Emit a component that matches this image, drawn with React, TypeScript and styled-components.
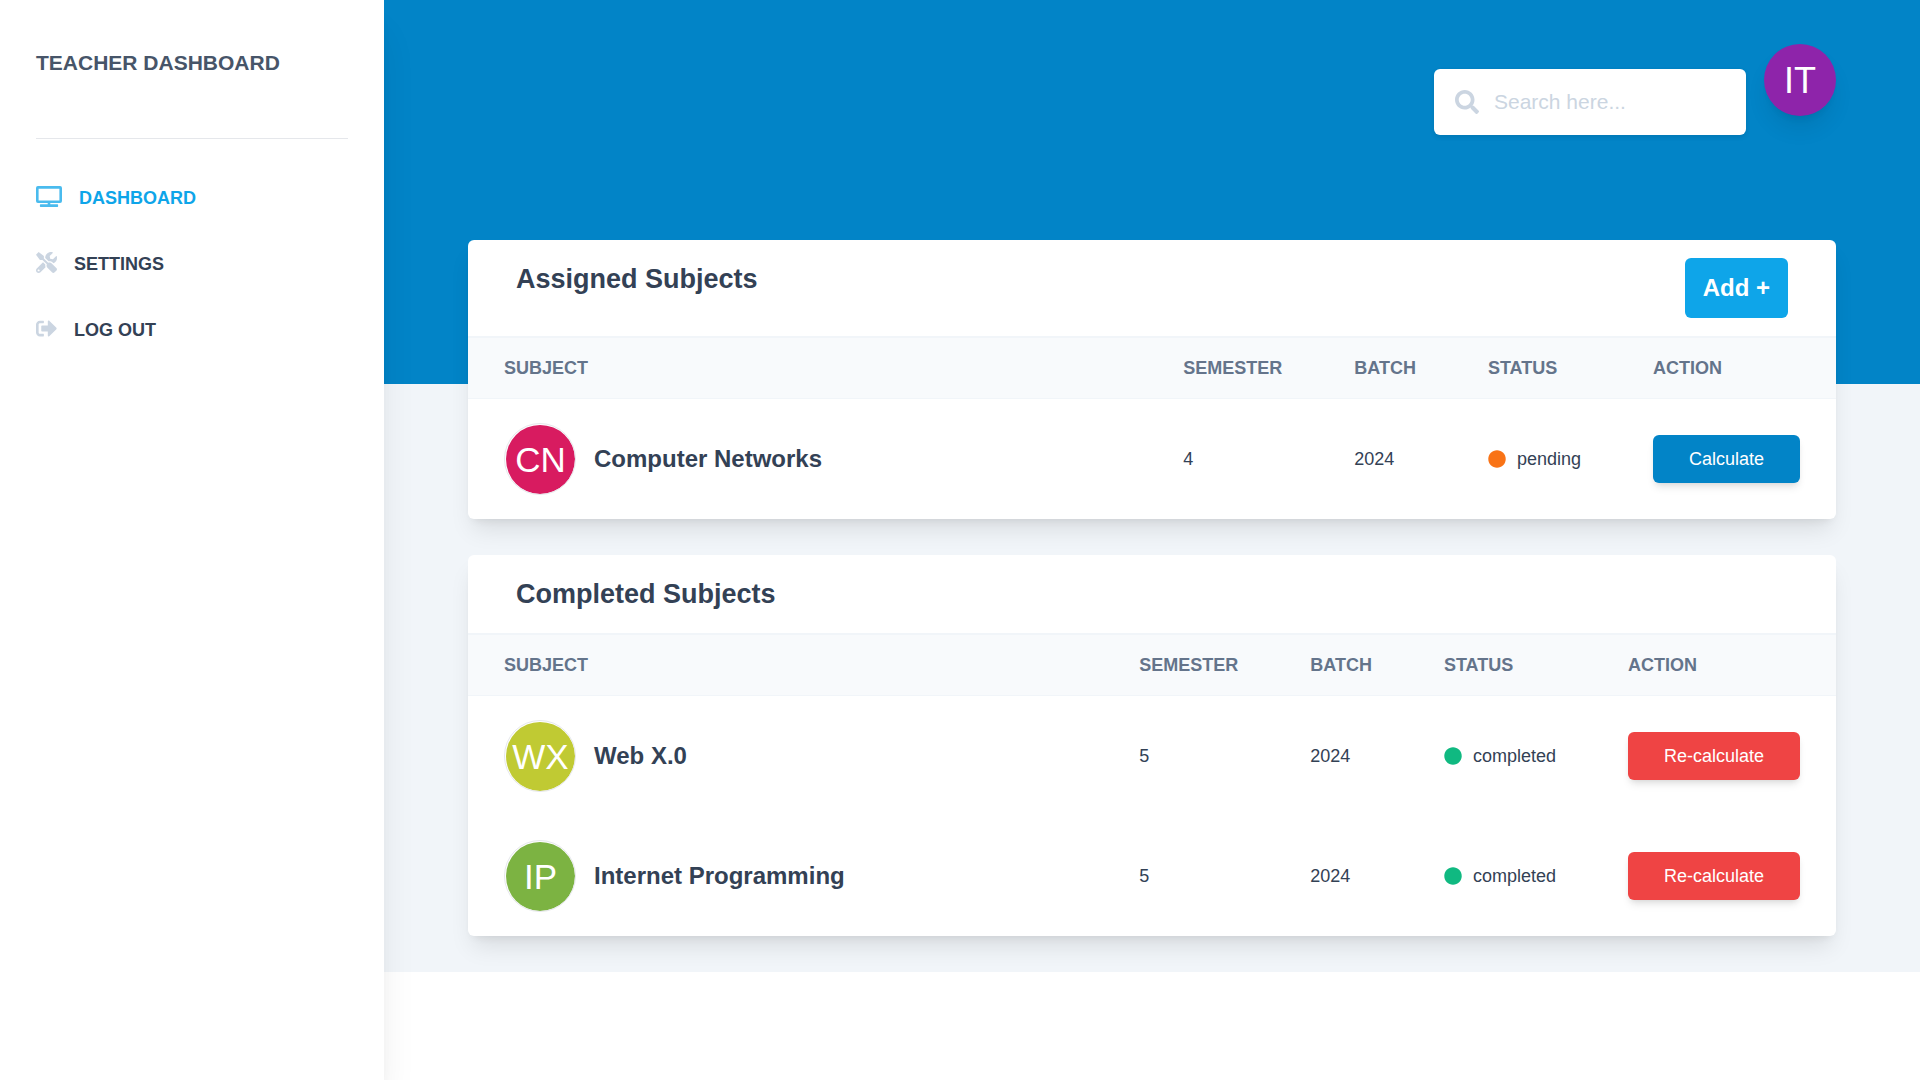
import React from "react";
import styled, { createGlobalStyle } from "styled-components";
import { FaCircle, FaSearch, FaSignOutAlt, FaTools, FaTv } from "react-icons/fa";

const GlobalStyle = createGlobalStyle`
  *, *::before, *::after { box-sizing: border-box; }
  body {
    margin: 0;
    background: #ffffff;
    color: #334155;
    font-family: "Liberation Sans", Arial, sans-serif;
    font-size: 18px;
    line-height: 24px;
  }
`;

const Layout = styled.div`
  display: flex;
  align-items: flex-start;
  min-height: 100vh;
`;

const Sidebar = styled.aside`
  position: relative;
  z-index: 1;
  flex: 0 0 384px;
  align-self: stretch;
  padding: 24px 36px;
  background: #ffffff;
  box-shadow: 0 30px 38px -8px rgba(0, 0, 0, 0.1), 0 12px 15px -9px rgba(0, 0, 0, 0.1);
`;

const Brand = styled.a`
  display: block;
  padding: 24px 0;
  color: #475569;
  font-size: 21px;
  line-height: 30px;
  font-weight: 700;
  text-decoration: none;
  text-transform: uppercase;
`;

const Divider = styled.hr`
  margin: 36px 0 26px;
  border: 0;
  border-top: 1px solid #e5e7eb;
`;

const NavList = styled.ul`
  margin: 0;
  padding: 0;
  list-style: none;
`;

const NavLink = styled.a<{ $active?: boolean; $wideIcon?: boolean }>`
  display: block;
  padding: 18px 0;
  line-height: 30px;
  font-weight: 700;
  text-decoration: none;
  text-transform: uppercase;
  color: ${({ $active }) => ($active ? "#0ea5e9" : "#334155")};

  svg {
    width: ${({ $wideIcon }) => ($wideIcon ? "26px" : "21px")};
    height: 21px;
    margin-right: 12px;
    vertical-align: -3px;
    color: ${({ $active }) => ($active ? "#0ea5e9" : "#cbd5e1")};
    opacity: ${({ $active }) => ($active ? 0.75 : 1)};
  }
`;

const Main = styled.main`
  flex: 1;
  min-width: 0;
  background: #f1f5f9;
`;

const Hero = styled.header`
  display: flex;
  justify-content: flex-end;
  align-items: flex-start;
  gap: 18px;
  height: 384px;
  padding: 44px 84px 0;
  background: #0284c7;
`;

const SearchBox = styled.label`
  display: flex;
  align-items: center;
  gap: 15px;
  width: 312px;
  height: 66px;
  margin-top: 25px;
  padding: 0 21px;
  border-radius: 6px;
  background: #ffffff;
  color: #cbd5e1;
  box-shadow: 0 2px 5px rgba(0, 0, 0, 0.1);

  svg {
    flex: none;
    width: 24px;
    height: 24px;
  }
`;

const SearchInput = styled.input`
  flex: 1;
  min-width: 0;
  padding: 0;
  border: 0;
  outline: 0;
  background: transparent;
  color: #475569;
  font: inherit;
  font-size: 21px;

  &::placeholder {
    color: #cbd5e1;
    opacity: 1;
  }
`;

const UserAvatar = styled.span`
  display: flex;
  align-items: center;
  justify-content: center;
  width: 72px;
  height: 72px;
  padding-top: 2px;
  border-radius: 50%;
  background: #8e24aa;
  color: #ffffff;
  font-size: 36px;
  box-shadow: 0 15px 23px -5px rgba(0, 0, 0, 0.1), 0 6px 9px -6px rgba(0, 0, 0, 0.1);
`;

const Content = styled.div`
  display: flex;
  flex-direction: column;
  gap: 36px;
  margin-top: -144px;
  padding: 0 84px 36px;
`;

const Card = styled.section`
  overflow: hidden;
  border-radius: 6px;
  background: #ffffff;
  box-shadow: 0 15px 23px -5px rgba(0, 0, 0, 0.1), 0 6px 9px -6px rgba(0, 0, 0, 0.1);
`;

const CardHeader = styled.div`
  display: flex;
  align-items: flex-start;
  justify-content: space-between;
  padding: 18px 48px;
`;

const CardTitle = styled.h3`
  margin: 0;
  font-size: 27px;
  line-height: 42px;
  font-weight: 700;
`;

const AddButton = styled.button`
  padding: 12px 18px;
  border: 0;
  border-radius: 6px;
  background: #0ea5e9;
  color: #ffffff;
  font: inherit;
  font-size: 24px;
  line-height: 36px;
  font-weight: 700;
`;

const Table = styled.table`
  width: 100%;
  border-collapse: separate;
  border-spacing: 0;
`;

const HeadCell = styled.th<{ $wide?: boolean }>`
  width: ${({ $wide }) => ($wide ? "100%" : "auto")};
  padding: 18px 36px;
  border-top: 2px solid #f1f5f9;
  border-bottom: 1px solid #f1f5f9;
  background: #f8fafc;
  color: #64748b;
  font-weight: 700;
  text-align: left;
  text-transform: uppercase;
  white-space: nowrap;
`;

const Cell = styled.td`
  padding: 24px 36px;
  white-space: nowrap;
`;

const Subject = styled.div`
  display: flex;
  align-items: center;
  gap: 18px;
  font-size: 24px;
  font-weight: 700;
`;

const SubjectAvatar = styled.span<{ $color: string }>`
  display: flex;
  align-items: center;
  justify-content: center;
  width: 72px;
  height: 72px;
  padding: 1px 0 0 1px;
  border: 1px solid #e5e7eb;
  border-radius: 50%;
  background: ${({ $color }) => $color} content-box;
  color: #ffffff;
  font-size: 35px;
  font-weight: 400;
`;

const Status = styled.span<{ $color: string }>`
  display: flex;
  align-items: center;
  gap: 11px;

  svg {
    width: 18px;
    height: 18px;
    color: ${({ $color }) => $color};
  }
`;

const ActionButton = styled.button<{ $color: string }>`
  display: block;
  padding: 12px 36px;
  border: 0;
  border-radius: 6px;
  background: ${({ $color }) => $color};
  color: #ffffff;
  font: inherit;
  box-shadow: 0 6px 9px -2px rgba(0, 0, 0, 0.1), 0 3px 6px -3px rgba(0, 0, 0, 0.1);
`;

type SubjectRow = {
  initials: string;
  color: string;
  name: string;
  semester: number;
  batch: number;
  status: "pending" | "completed";
};

const assigned: SubjectRow[] = [
  { initials: "CN", color: "#d81b60", name: "Computer Networks", semester: 4, batch: 2024, status: "pending" },
];

const completed: SubjectRow[] = [
  { initials: "WX", color: "#c0ca33", name: "Web X.0", semester: 5, batch: 2024, status: "completed" },
  { initials: "IP", color: "#7cb342", name: "Internet Programming", semester: 5, batch: 2024, status: "completed" },
];

const statusStyles = {
  pending: { dot: "#f97316", button: "#0284c7", action: "Calculate" },
  completed: { dot: "#10b981", button: "#ef4444", action: "Re-calculate" },
};

function SubjectsCard({ title, rows, canAdd }: { title: string; rows: SubjectRow[]; canAdd?: boolean }) {
  return (
    <Card>
      <CardHeader>
        <CardTitle>{title}</CardTitle>
        {canAdd && <AddButton type="button">Add +</AddButton>}
      </CardHeader>
      <Table>
        <thead>
          <tr>
            <HeadCell $wide>Subject</HeadCell>
            <HeadCell>Semester</HeadCell>
            <HeadCell>Batch</HeadCell>
            <HeadCell>Status</HeadCell>
            <HeadCell>Action</HeadCell>
          </tr>
        </thead>
        <tbody>
          {rows.map((row) => {
            const style = statusStyles[row.status];
            return (
              <tr key={row.name}>
                <Cell>
                  <Subject>
                    <SubjectAvatar $color={row.color}>{row.initials}</SubjectAvatar>
                    {row.name}
                  </Subject>
                </Cell>
                <Cell>{row.semester}</Cell>
                <Cell>{row.batch}</Cell>
                <Cell>
                  <Status $color={style.dot}>
                    <FaCircle aria-hidden />
                    {row.status}
                  </Status>
                </Cell>
                <Cell>
                  <ActionButton type="button" $color={style.button}>
                    {style.action}
                  </ActionButton>
                </Cell>
              </tr>
            );
          })}
        </tbody>
      </Table>
    </Card>
  );
}

export default function App() {
  return (
    <>
      <GlobalStyle />
      <Layout>
        <Sidebar>
          <Brand href="#">Teacher Dashboard</Brand>
          <Divider />
          <nav>
            <NavList>
              <li>
                <NavLink href="#dashboard" $active $wideIcon>
                  <FaTv aria-hidden /> Dashboard
                </NavLink>
              </li>
              <li>
                <NavLink href="#settings">
                  <FaTools aria-hidden /> Settings
                </NavLink>
              </li>
              <li>
                <NavLink href="#logout">
                  <FaSignOutAlt aria-hidden /> Log out
                </NavLink>
              </li>
            </NavList>
          </nav>
        </Sidebar>
        <Main>
          <Hero>
            <SearchBox>
              <FaSearch aria-hidden />
              <SearchInput type="text" placeholder="Search here..." aria-label="Search" />
            </SearchBox>
            <UserAvatar>IT</UserAvatar>
          </Hero>
          <Content>
            <SubjectsCard title="Assigned Subjects" rows={assigned} canAdd />
            <SubjectsCard title="Completed Subjects" rows={completed} />
          </Content>
        </Main>
      </Layout>
    </>
  );
}
